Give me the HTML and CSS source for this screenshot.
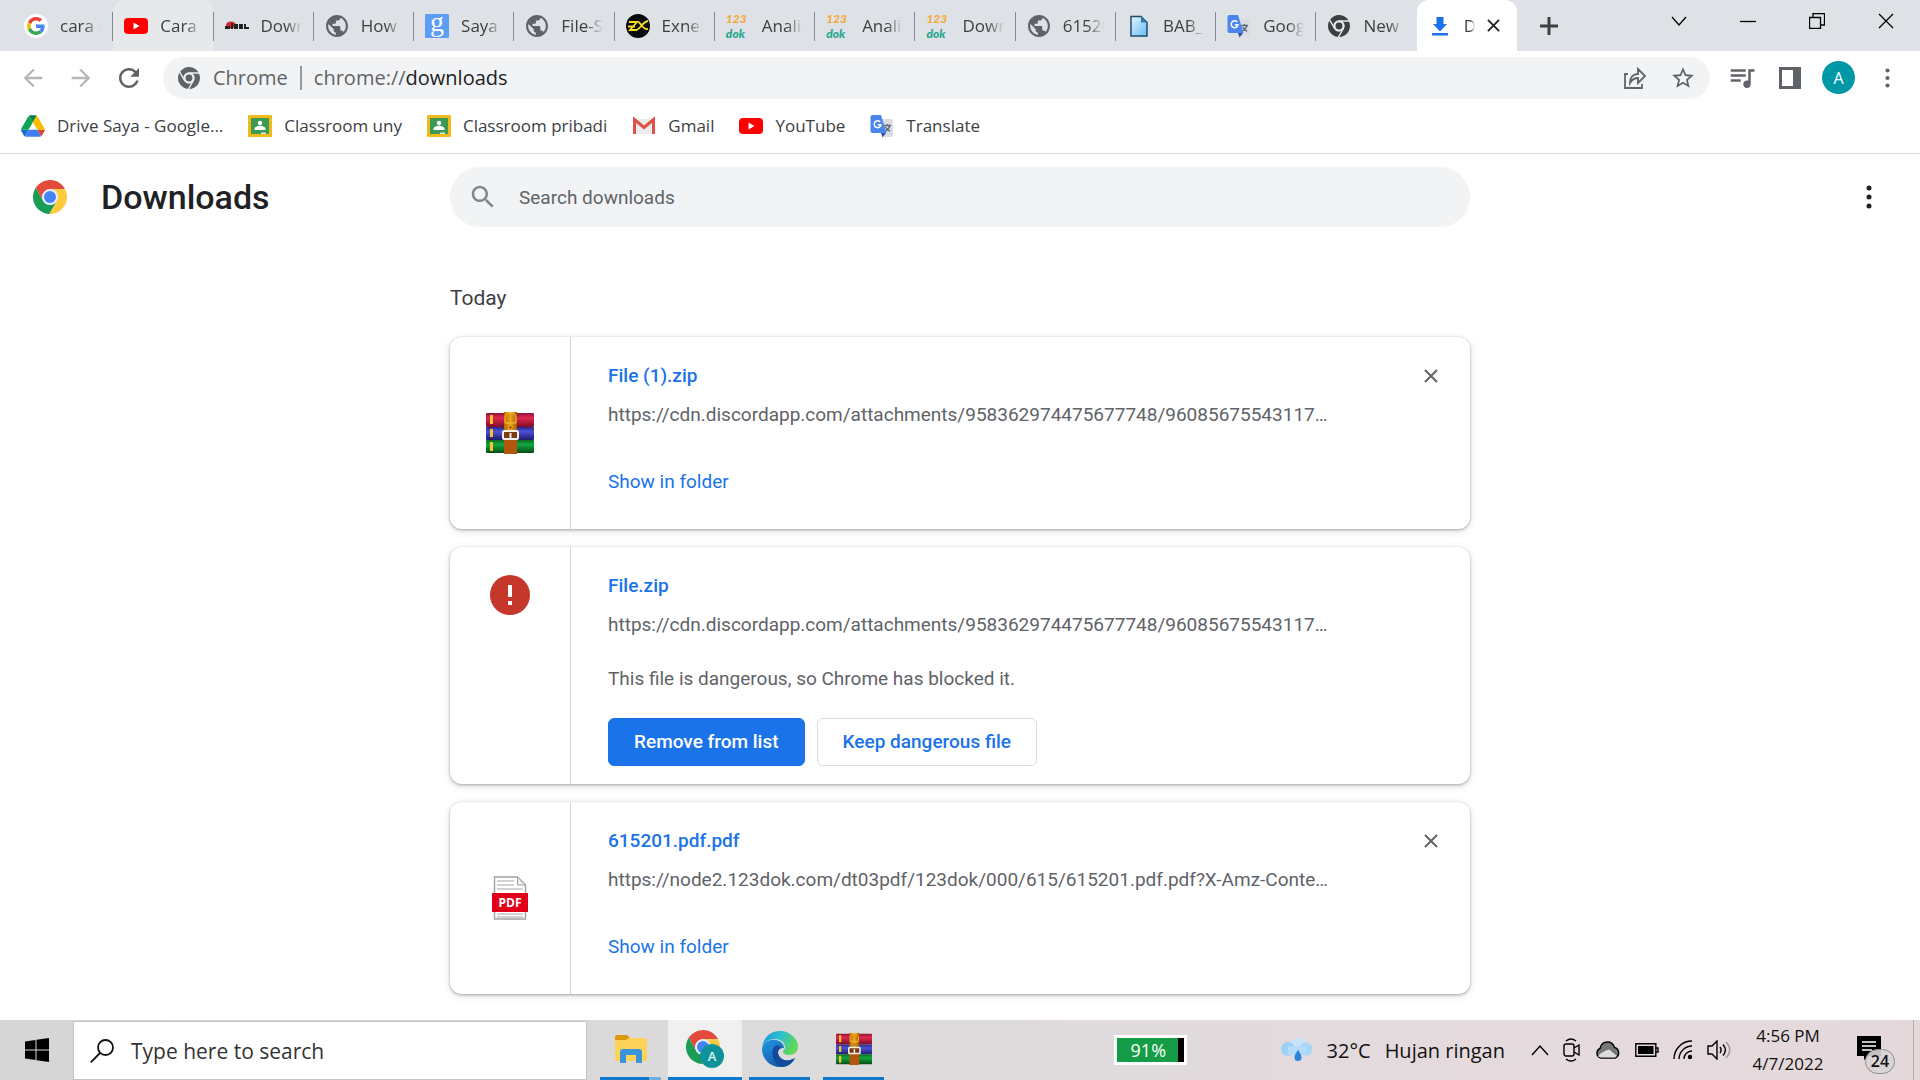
FILE: index.html
```html
<!DOCTYPE html>
<html lang="en">
<head>
  <meta charset="UTF-8" />
  <meta name="viewport" content="width=device-width, initial-scale=1.0"/>
  <title>Downloads</title>
  <link rel="stylesheet" href="styles.css">
</head>
<body>
  <!-- Shared icons -->
  <svg class="defs" aria-hidden="true">
    <symbol id="globe" viewBox="2 2 20 20"><path fill="#5f6368" d="M12 2C6.48 2 2 6.48 2 12s4.48 10 10 10 10-4.48 10-10S17.52 2 12 2zm-1 17.93c-3.95-.49-7-3.85-7-7.93 0-.62.08-1.21.21-1.79L9 15v1c0 1.1.9 2 2 2v1.93zm6.9-2.54c-.26-.81-1-1.39-1.9-1.39h-1v-3c0-.55-.45-1-1-1H8v-2h2c.55 0 1-.45 1-1V7h2c1.1 0 2-.9 2-2v-.41c2.93 1.19 5 4.06 5 7.41 0 2.08-.8 3.97-2.1 5.39z"/></symbol>
    <symbol id="youtube" viewBox="0 0 24 24"><rect y="4" width="24" height="16" rx="4" fill="#f00"/><path fill="#fff" d="M9.500 8.500v7l6-3.500z"/></symbol>
    <symbol id="translate" viewBox="0 0 24 24"><path fill="#dadce0" d="M9 5h12a2 2 0 0 1 2 2v14a2 2 0 0 1-2 2h-7z"/><path fill="none" stroke="#5f6b7a" stroke-width="1.300" d="M14 11.500h7M17.500 10v1.500M20 11.500c-.7 2.600-2.600 4.600-5 5.800M15.500 13c1 2 2.800 3.500 4.700 4.400"/><path fill="#2f4fa8" d="M11 19h5l-3.500 4.500z"/><path fill="#4a86ee" d="M2.500 1H11l5.500 18h-14a2 2 0 0 1-2-2V3a2 2 0 0 1 2-2z"/><path fill="none" stroke="#fff" stroke-width="1.500" d="M10.200 8A3.400 3.400 0 1 0 11 10.700H7.800"/></symbol>
    <symbol id="classroom" viewBox="0 0 24 24"><rect y="1" width="24" height="22" rx="1" fill="#f0b91c"/><rect x="3" y="4" width="18" height="16" fill="#3c9a53"/><circle cx="12" cy="9" r="2.200" fill="#fff"/><path fill="#fff" d="M6.500 16v-1.200c0-2 3.500-3 5.500-3s5.500 1 5.500 3V16z"/><path fill="#dfe9df" d="M13 18.500h5V20h-5z"/></symbol>
    <symbol id="chrome-mono" viewBox="0 0 48 48"><g fill="currentColor"><path d="M3.810 11.030A24 24 0 0 1 45.330 13L24 13A11 11 0 0 0 14.470 29.500Z"/><path d="M45.330 13A24 24 0 0 1 22.860 47.970L33.530 29.500A11 11 0 0 0 24 13Z"/><path d="M22.860 47.970A24 24 0 0 1 3.810 11.030L14.470 29.500A11 11 0 0 0 33.530 29.500Z"/></g><g fill="none" stroke="#eceef0" stroke-width="3"><path d="M24 13h22M33.530 29.500L22.500 48.600M14.470 29.500L3.500 10.500"/><circle cx="24" cy="24" r="11"/></g><circle cx="24" cy="24" r="7.500" fill="currentColor"/></symbol>
    <symbol id="chrome" viewBox="0 0 48 48"><path fill="#e34b3d" d="M3.810 11.030A24 24 0 0 1 45.330 13L24 13A11 11 0 0 0 14.470 29.500Z"/><path fill="#fdcb3c" d="M45.330 13A24 24 0 0 1 22.860 47.970L33.530 29.500A11 11 0 0 0 24 13Z"/><path fill="#1a9c55" d="M22.860 47.970A24 24 0 0 1 3.810 11.030L14.470 29.500A11 11 0 0 0 33.530 29.500Z"/><circle cx="24" cy="24" r="11" fill="#e8eefb"/><circle cx="24" cy="24" r="8.500" fill="#4384f4"/></symbol>
    <symbol id="arrow" viewBox="0 0 24 24"><path fill="currentColor" d="M20 11H7.830l5.590-5.590L12 4l-8 8 8 8 1.410-1.410L7.830 13H20v-2z"/></symbol>
    <symbol id="cross" viewBox="0 0 14 14"><path stroke="currentColor" stroke-width="2" d="M1 1l12 12M13 1L1 13"/></symbol>
    <symbol id="dots" viewBox="0 0 6 24"><g fill="currentColor"><circle cx="3" cy="3" r="2.500"/><circle cx="3" cy="12" r="2.500"/><circle cx="3" cy="21" r="2.500"/></g></symbol>
    <linearGradient id="book-red" x2="0" y2="1"><stop stop-color="#8c1534"/><stop offset=".35" stop-color="#e0284f"/><stop offset="1" stop-color="#7d0d28"/></linearGradient>
    <linearGradient id="book-blue" x2="0" y2="1"><stop stop-color="#2a2587"/><stop offset=".35" stop-color="#4c52d8"/><stop offset="1" stop-color="#1f1b6b"/></linearGradient>
    <linearGradient id="book-green" x2="0" y2="1"><stop stop-color="#0a6b22"/><stop offset=".35" stop-color="#12a83f"/><stop offset="1" stop-color="#064a16"/></linearGradient>
    <linearGradient id="strap" x2="1" y2="0"><stop stop-color="#b06a05"/><stop offset=".5" stop-color="#f0a51c"/><stop offset="1" stop-color="#a05c04"/></linearGradient>
    <symbol id="winrar" viewBox="0 0 48 42" preserveAspectRatio="none">
      <rect y="1" width="48" height="14" rx="1" fill="url(#book-red)"/>
      <rect y="15" width="48" height="13" rx="1" fill="url(#book-blue)"/>
      <rect y="28" width="48" height="13" rx="1" fill="url(#book-green)"/>
      <path fill="#f7c52b" d="M4 3h3v9H4zM4 17h3v8H4zM4 30h3v9H4z"/>
      <path fill="url(#strap)" d="M18 0h13v19H18z"/>
      <path fill="#b3560d" d="M18 27h13v15H18z"/>
      <path fill="none" stroke="#f8c43a" stroke-width="1" d="M19 11V6a5 5 0 0 1 11 0v5z"/>
      <circle cx="24.500" cy="15.500" r="1" fill="#5c3200"/>
      <rect x="17" y="19" width="15" height="8" rx="1" fill="#7a3c10" stroke="#f3f0ea" stroke-width="2"/>
      <path stroke="#f3f0ea" stroke-width="2" d="M24.500 21v6"/>
    </symbol>
  </svg>

  <!-- TAB STRIP -->
  <header class="tab-strip">
    <nav class="tabs" aria-label="Tabs">
      <a class="tab" href="#"><svg class="favicon" viewBox="-8 -8 64 64"><circle cx="24" cy="24" r="32" fill="#fff"/><path fill="#EA4335" d="M24 9.500c3.540 0 6.710 1.220 9.210 3.600l6.850-6.850C35.900 2.380 30.470 0 24 0 14.620 0 6.510 5.380 2.560 13.220l7.980 6.190C12.430 13.720 17.740 9.500 24 9.500z"/><path fill="#4285F4" d="M46.980 24.550c0-1.570-.15-3.090-.38-4.550H24v9.020h12.940c-.58 2.960-2.260 5.480-4.780 7.180l7.730 6c4.510-4.180 7.090-10.360 7.090-17.650z"/><path fill="#FBBC05" d="M10.530 28.590c-.48-1.450-.76-2.990-.76-4.590s.27-3.140.76-4.590l-7.980-6.190C.92 16.460 0 20.120 0 24c0 3.880.92 7.540 2.560 10.780l7.970-6.190z"/><path fill="#34A853" d="M24 48c6.480 0 11.930-2.130 15.890-5.810l-7.730-6c-2.150 1.450-4.920 2.300-8.160 2.300-6.260 0-11.570-4.220-13.470-9.910l-7.980 6.190C6.510 42.620 14.620 48 24 48z"/></svg><span class="tab-title">cara m</span></a>
      <a class="tab hovered" href="#"><svg class="favicon"><use href="#youtube"/></svg><span class="tab-title">Cara</span></a>
      <a class="tab" href="#"><svg class="favicon" viewBox="0 0 24 24"><ellipse cx="6" cy="11" rx="5" ry="3.500" fill="#d8232a"/><path fill="#222" d="M0 12h5v3H0zM6 9h2v6H6zM9 10h4v5H9zM14 10h4v5h-4zM19 10h2v3h3v2h-5z"/></svg><span class="tab-title">Down</span></a>
      <a class="tab" href="#"><svg class="favicon small"><use href="#globe"/></svg><span class="tab-title">How</span></a>
      <a class="tab" href="#"><svg class="favicon" viewBox="0 0 24 24"><rect width="24" height="24" rx="1" fill="#5c9df5"/><text x="12" y="17" text-anchor="middle" font-family="Liberation Serif" font-size="28" fill="#fff">g</text></svg><span class="tab-title">Saya</span></a>
      <a class="tab" href="#"><svg class="favicon small"><use href="#globe"/></svg><span class="tab-title">File-S</span></a>
      <a class="tab" href="#"><svg class="favicon" viewBox="0 0 24 24"><circle cx="12" cy="12" r="12" fill="#0a0a0a"/><path fill="none" stroke="#f5dc1e" stroke-width="1.800" d="M3 8h8l-7 8h6c4 0 6-8 12-9M2 12.500h7M12 8c3 0 4 8 10 7"/></svg><span class="tab-title">Exnes</span></a>
      <a class="tab" href="#"><span class="favicon dok"><b>123</b><b>dok</b></span><span class="tab-title">Analis</span></a>
      <a class="tab" href="#"><span class="favicon dok"><b>123</b><b>dok</b></span><span class="tab-title">Analis</span></a>
      <a class="tab" href="#"><span class="favicon dok"><b>123</b><b>dok</b></span><span class="tab-title">Down</span></a>
      <a class="tab" href="#"><svg class="favicon small"><use href="#globe"/></svg><span class="tab-title">61520</span></a>
      <a class="tab" href="#"><svg class="favicon" viewBox="0 0 24 24"><defs><linearGradient id="doc" x2="1" y2="1"><stop stop-color="#e3f4fe"/><stop offset="1" stop-color="#6bbcf2"/></linearGradient></defs><path fill="url(#doc)" stroke="#1d4e70" stroke-width="1.500" d="M4 2.500h10l6 6V22H4z"/><path fill="#2d7dae" d="M14 2.500v6h6z"/></svg><span class="tab-title">BAB_</span></a>
      <a class="tab" href="#"><svg class="favicon"><use href="#translate"/></svg><span class="tab-title">Goog</span></a>
      <a class="tab" href="#"><svg class="favicon small dark"><use href="#chrome-mono"/></svg><span class="tab-title">New</span></a>
      <div class="tab active">
        <svg class="favicon" viewBox="0 0 24 24"><path fill="#1a73e8" d="M8.500 3h7v7H19l-7 7.500L5 10h3.500zM4 19h16v2.500H4z"/></svg>
        <span class="tab-title">D</span>
        <button class="tab-close" aria-label="Close tab"><svg width="13" height="13"><use href="#cross"/></svg></button>
      </div>
    </nav>
    <button class="new-tab" aria-label="New tab"><svg width="18" height="18" viewBox="0 0 18 18"><path stroke="#3c4043" stroke-width="3" d="M9 0v18M0 9h18"/></svg></button>
    <div class="window-buttons">
      <button aria-label="Search tabs"><svg width="16" height="10" viewBox="0 0 16 10"><path d="M1 1l7 8 7-8"/></svg></button>
      <button aria-label="Minimize"><svg width="16" height="16" viewBox="0 0 16 16"><path d="M0 8.500h16"/></svg></button>
      <button aria-label="Restore"><svg width="16" height="16" viewBox="0 0 16 16"><path d="M.5 4.500h11v11H.5zM4 4V.5h11.500V12H12"/></svg></button>
      <button aria-label="Close"><svg width="16" height="16" viewBox="0 0 16 16"><path d="M1 1l14 14M15 1L1 15"/></svg></button>
    </div>
  </header>

  <!-- TOOLBAR -->
  <div class="toolbar">
    <button class="tool muted" aria-label="Back"><svg width="28" height="28"><use href="#arrow"/></svg></button>
    <button class="tool muted" aria-label="Forward"><svg class="flip" width="28" height="28"><use href="#arrow"/></svg></button>
    <button class="tool" aria-label="Reload"><svg width="30" height="30" viewBox="0 0 24 24"><path fill="currentColor" d="M17.650 6.350C16.200 4.900 14.210 4 12 4c-4.420 0-7.990 3.580-7.990 8s3.570 8 7.990 8c3.730 0 6.840-2.550 7.730-6h-2.080c-.82 2.330-3.040 4-5.650 4-3.310 0-6-2.690-6-6s2.690-6 6-6c1.660 0 3.140.69 4.220 1.780L13 11h7V4l-2.350 2.350z"/></svg></button>
    <div class="omnibox">
      <svg class="site-icon"><use href="#chrome-mono"/></svg>
      <span class="site-name">Chrome</span>
      <span class="address">chrome://<b>downloads</b></span>
      <button class="tool" aria-label="Share"><svg width="24" height="24" viewBox="0 0 24 24"><path fill="none" stroke="currentColor" stroke-width="1.800" d="M5 8H2v14h17v-4M7 17c0-6 3-9 8-9V3l7 7-7 7v-5c-4 0-6 1.500-8 5z"/></svg></button>
      <button class="tool" aria-label="Bookmark this page"><svg width="26" height="26" viewBox="0 0 24 24"><path fill="currentColor" d="M22 9.240l-7.190-.62L12 2 9.190 8.630 2 9.240l5.460 4.730L5.820 21 12 17.270 18.180 21l-1.630-7.030L22 9.240zM12 15.400l-3.760 2.270 1-4.280-3.320-2.880 4.380-.38L12 6.100l1.710 4.040 4.380.38-3.320 2.880 1 4.280L12 15.400z"/></svg></button>
    </div>
    <button class="tool" aria-label="Media controls"><svg width="30" height="30" viewBox="0 0 24 24"><path fill="currentColor" d="M15 5H3v2h12V5zm0 4H3v2h12V9zM3 15h8v-2H3v2zM17 5v9.180c-.31-.11-.65-.18-1-.18-1.660 0-3 1.340-3 3s1.340 3 3 3 3-1.340 3-3V7h3V5h-5z"/></svg></button>
    <button class="tool" aria-label="Side panel"><svg width="22" height="22" viewBox="0 0 22 22"><path fill="currentColor" d="M0 0h22v22H0zM3 3v16h11V3z" fill-rule="evenodd"/></svg></button>
    <button class="avatar" aria-label="Profile">A</button>
    <button class="tool" aria-label="Menu"><svg width="5" height="20"><use href="#dots"/></svg></button>
  </div>

  <!-- BOOKMARKS -->
  <nav class="bookmarks" aria-label="Bookmarks">
    <a href="#"><svg class="favicon" viewBox="0 0 88 78"><path fill="#1967d2" d="M6.600 66.850l3.850 6.650c.8 1.400 1.950 2.500 3.300 3.300L27.500 53H0c0 1.550.4 3.100 1.200 4.500z"/><path fill="#11a455" d="M43.650 25L29.900 1.200c-1.350.8-2.500 1.900-3.300 3.300L1.200 48.500A9 9 0 0 0 0 53h27.500z"/><path fill="#e0452f" d="M73.550 76.800c1.350-.8 2.500-1.900 3.300-3.300l9.250-16c.8-1.400 1.200-2.950 1.200-4.500H59.800z"/><path fill="#0b8043" d="M43.650 25L57.400 1.200C56.050.4 54.500 0 52.900 0H34.400c-1.600 0-3.150.45-4.500 1.200z"/><path fill="#3d7ef0" d="M59.800 53H27.500L13.750 76.800c1.350.8 2.900 1.200 4.500 1.200h50.800c1.600 0 3.150-.45 4.500-1.200z"/><path fill="#fbbc04" d="M73.400 26.500L60.700 4.500c-.8-1.400-1.950-2.500-3.300-3.300L43.650 25 59.800 53h27.450c0-1.550-.4-3.100-1.200-4.500z"/></svg>Drive Saya - Google...</a>
    <a href="#"><svg class="favicon"><use href="#classroom"/></svg>Classroom uny</a>
    <a href="#"><svg class="favicon"><use href="#classroom"/></svg>Classroom pribadi</a>
    <a href="#"><svg class="favicon" viewBox="0 0 24 24"><path fill="#ececec" d="M2 5h20v15H2z"/><path fill="none" stroke="#dc5148" stroke-width="3" d="M2.500 20V5.500L12 13.500l9.500-8V20"/></svg>Gmail</a>
    <a href="#"><svg class="favicon"><use href="#youtube"/></svg>YouTube</a>
    <a href="#"><svg class="favicon"><use href="#translate"/></svg>Translate</a>
  </nav>

  <!-- DOWNLOADS PAGE -->
  <main class="page">
    <div class="page-header">
      <div class="brand">
        <svg class="logo"><use href="#chrome"/></svg>
        <h1>Downloads</h1>
      </div>
      <label class="search">
        <svg width="30" height="30" viewBox="0 0 24 24"><path fill="#80868b" d="M15.500 14h-.79l-.28-.27C15.410 12.590 16 11.110 16 9.500 16 5.910 13.090 3 9.500 3S3 5.910 3 9.500 5.910 16 9.500 16c1.610 0 3.090-.59 4.230-1.570l.27.28v.79l5 4.990L20.490 19l-4.990-5zm-6 0C7.010 14 5 11.990 5 9.500S7.010 5 9.500 5 14 7.010 14 9.500 11.990 14 9.500 14z"/></svg>
        <input type="search" placeholder="Search downloads" aria-label="Search downloads">
      </label>
      <button class="more" aria-label="More actions"><svg width="6" height="24"><use href="#dots"/></svg></button>
    </div>

    <section class="list">
      <h2>Today</h2>

      <article class="card">
        <div class="file-icon"><svg width="48" height="42"><use href="#winrar"/></svg></div>
        <div class="details">
          <a class="name" href="#">File (1).zip</a>
          <p class="url">https://cdn.discordapp.com/attachments/958362974475677748/96085675543117…</p>
          <a class="show" href="#">Show in folder</a>
        </div>
        <button class="remove" aria-label="Remove from list"><svg width="14" height="14"><use href="#cross"/></svg></button>
      </article>

      <article class="card dangerous">
        <div class="file-icon"><svg width="40" height="40" viewBox="0 0 40 40"><circle cx="20" cy="20" r="20" fill="#c5362b"/><path fill="#fff" d="M18 10h4v12h-4zM18 26h4v4h-4z"/></svg></div>
        <div class="details">
          <a class="name" href="#">File.zip</a>
          <p class="url">https://cdn.discordapp.com/attachments/958362974475677748/96085675543117…</p>
          <p class="warning">This file is dangerous, so Chrome has blocked it.</p>
          <div class="actions">
            <button class="btn primary">Remove from list</button>
            <button class="btn">Keep dangerous file</button>
          </div>
        </div>
      </article>

      <article class="card">
        <div class="file-icon"><svg width="36" height="44" viewBox="0 0 36 44"><path fill="#fff" stroke="#a3a3a3" stroke-width="1.500" d="M2.500 1h23l8 8v34h-31z"/><path fill="#eee" stroke="#a3a3a3" d="M25.500 1v8h8z"/><path stroke="#c4c4c4" stroke-width="1.500" d="M5 5h17M5 9h17M5 13h26M5 38h26M5 41h26"/><path fill="#e1001a" d="M0 17h36v19H0z"/><text x="18" y="31" text-anchor="middle" font-family="Open Sans" font-weight="700" font-size="12" fill="#fff">PDF</text></svg></div>
        <div class="details">
          <a class="name" href="#">615201.pdf.pdf</a>
          <p class="url">https://node2.123dok.com/dt03pdf/123dok/000/615/615201.pdf.pdf?X-Amz-Conte…</p>
          <a class="show" href="#">Show in folder</a>
        </div>
        <button class="remove" aria-label="Remove from list"><svg width="14" height="14"><use href="#cross"/></svg></button>
      </article>
    </section>
  </main>

  <!-- TASKBAR -->
  <footer class="taskbar">
    <button class="start" aria-label="Start"><svg width="24" height="24" viewBox="0 0 24 24"><path d="M0 3.400L10.500 2v9.500H0zM11.500 1.800L24 0v11.500H11.500zM0 12.500h10.500V22L0 20.600zM11.500 12.500H24V24l-12.500-1.800z"/></svg></button>
    <label class="task-search">
      <svg width="24" height="24" viewBox="0 0 24 24" fill="none" stroke="#111" stroke-width="1.800"><circle cx="15.500" cy="8.500" r="7.500"/><path d="M10 14L.8 23.300"/></svg>
      <input type="search" placeholder="Type here to search" aria-label="Type here to search">
    </label>
    <div class="apps">
      <button class="app stacked" aria-label="File Explorer"><svg width="34" height="28" viewBox="0 0 34 28"><path fill="#d99a0b" d="M1 2a2 2 0 0 1 2-2h10l3 3-3 4H1z"/><path fill="#fcd258" d="M1 5h11l3-2h16a2 2 0 0 1 2 2v21H1z"/><path fill="#3a94da" d="M6 28V17a3 3 0 0 1 3-3h16a3 3 0 0 1 3 3v11h-6v-8H12v8z"/></svg></button>
      <button class="app current" aria-label="Google Chrome"><svg width="38" height="38" viewBox="0 0 38 38"><use href="#chrome" width="34" height="34"/><circle cx="26" cy="26" r="12" fill="#0f9299"/><text x="26" y="31" text-anchor="middle" font-family="Open Sans" font-size="13" font-weight="600" fill="#d9f3f3">A</text></svg></button>
      <button class="app" aria-label="Microsoft Edge"><svg width="36" height="36" viewBox="0 0 36 36"><defs><linearGradient id="edge-top" x1="0" x2="1" y2=".4"><stop stop-color="#1b8fd8"/><stop offset=".5" stop-color="#2bbfd3"/><stop offset="1" stop-color="#5fd957"/></linearGradient><linearGradient id="edge-low" x2=".7" y2="1"><stop stop-color="#1f97e3"/><stop offset="1" stop-color="#1454a4"/></linearGradient></defs><path fill="url(#edge-low)" d="M0 18C1 11 7 8 14 9c5 1 8 4 8 8-6 0-7 4-5 8 3 5 10 6 16 2-3 6-9 9-15 9C8 36 0 28 0 18z"/><path fill="#134b9b" d="M14 14c-6 5-5 17 6 22 6-.5 10-3.500 13-9-6 4-13 3-16-2-2-4-1-7 3-9z"/><path fill="url(#edge-top)" d="M0 17C1 7 8 0 18 0s18 8 18 15c0 6-4 9-9 9-4 0-6-1.500-6-3s2-2 2-5c0-4-4-8-10-8C6 8 1 12 0 17z"/></svg></button>
      <button class="app" aria-label="WinRAR"><svg width="36" height="32"><use href="#winrar"/></svg></button>
    </div>
    <div class="battery-meter"><span>91%</span></div>
    <div class="tray">
      <button class="weather"><svg width="32" height="24" viewBox="0 0 32 24"><circle cx="17" cy="8" r="8" fill="#c6e3f9"/><circle cx="7" cy="11" r="7" fill="#9dd0f5"/><circle cx="25" cy="11" r="6.500" fill="#a6d6f8"/><path fill="#b4dbf8" d="M7 8h18v9H7z"/><path fill="#2b86da" d="M17 12c2 3 3.500 5 3.500 7.500a3.500 3.500 0 0 1-7 0c0-2.500 1.500-4.500 3.500-7.500z"/></svg><span>32°C</span><span>Hujan ringan</span></button>
      <button class="tray-icon" aria-label="Show hidden icons"><svg width="18" height="12" viewBox="0 0 18 12"><path d="M1 11l8-9 8 9"/></svg></button>
      <button class="tray-icon" aria-label="Meet Now"><svg width="18" height="24" viewBox="0 0 18 24"><rect x="1" y="6" width="10" height="12" rx="2"/><path d="M11 10l5-3v10l-5-3M3 3c3-2.500 7-2.500 10 0M3 21c3 2.500 7 2.500 10 0"/></svg></button>
      <button class="tray-icon" aria-label="OneDrive"><svg width="26" height="18" viewBox="0 0 26 18"><path fill="#777" d="M6 17a5 5 0 0 1-1-9.500C6 3 9 1 12.500 1c4 0 6 2.500 7 5.500A5.500 5.500 0 0 1 20 17z"/><path fill="#ddd" stroke="none" d="M3 15.500c1-3 8-6 11-7l8 6.500-2 1.500H6z"/></svg></button>
      <button class="tray-icon" aria-label="Battery"><svg width="24" height="14" viewBox="0 0 24 14"><path d="M.8.8h20v12.400H.8zM21 5h2v4h-2"/><path fill="#000" stroke="none" d="M3 3h15.500v8H3z"/></svg></button>
      <button class="tray-icon" aria-label="Wi-Fi"><svg width="20" height="20" viewBox="0 0 20 20"><path d="M1 19C1 9 9 1 19 1M6 19C6 12 12 6 19 6M11 19c0-4.500 3.500-8 8-8"/><circle cx="17" cy="17" r="1.500" fill="#000"/></svg></button>
      <button class="tray-icon" aria-label="Volume"><svg width="24" height="20" viewBox="0 0 24 20"><path d="M1 6h4l5-5v18l-5-5H1zM13 7c1.500 2 1.500 4 0 6M16 4.500c3 3.500 3 7.500 0 11"/><path stroke="#999" d="M19 2c5 5 5 11 0 16"/></svg></button>
      <button class="clock"><span>4:56 PM</span><span>4/7/2022</span></button>
      <button class="notifications" aria-label="24 notifications"><svg width="24" height="24" viewBox="0 0 24 24"><path d="M0 0h24v20H12l-5 4v-4H0z"/><path stroke="#fff" stroke-width="1.500" d="M5 6h14M5 10h14M5 14h10"/></svg><span class="badge">24</span></button>
    </div>
  </footer>
</body>
</html>
```
FILE: styles.css
```css
* {
  margin: 0;
  padding: 0;
  box-sizing: border-box;
}

body {
  height: 100vh;
  display: flex;
  flex-direction: column;
  overflow: hidden;
  background: #fff;
  color: #3c4043;
  font-family: "Open Sans", "Noto Sans", sans-serif;
  font-size: 17px;
}

.defs {
  position: absolute;
  width: 0;
  height: 0;
}

svg {
  display: block;
  flex: none;
}

a {
  color: inherit;
  text-decoration: none;
}

button {
  display: flex;
  align-items: center;
  justify-content: center;
  border: none;
  background: none;
  color: inherit;
  font: inherit;
}

input {
  flex: 1;
  min-width: 0;
  border: none;
  outline: none;
  background: none;
  font: inherit;
}

.favicon {
  width: 24px;
  height: 24px;
}

/* TAB STRIP */
.tab-strip {
  display: flex;
  height: 51px;
  flex: none;
  padding-left: 13px;
  background: #dee1e6;
}

.tabs {
  display: grid;
  grid-template-columns: repeat(15, minmax(0, 1fr));
  flex: 0 1 1504px;
  min-width: 0;
}

.tab {
  position: relative;
  display: flex;
  align-items: center;
  min-width: 0;
  gap: 12px;
  padding: 0 12px 0 11px;
}

/* Separator between tabs */
.tab:not(.active)::after {
  content: "";
  position: absolute;
  right: 0;
  top: 12px;
  width: 1px;
  height: 29px;
  background: #85898f;
}

.tab:nth-last-child(2)::after {
  display: none;
}

.tab.hovered {
  background: #e6e8eb;
  border-radius: 12px 12px 0 0;
}

.favicon.small {
  width: 22px;
  height: 22px;
  margin: 0 1px;
}

.favicon.dark {
  color: #3c4043;
}

/* 123dok logo, two stacked words */
.dok {
  display: flex;
  flex: none;
  flex-direction: column;
  justify-content: center;
  font-family: Lato, sans-serif;
  font-size: 12px;
  font-style: italic;
  line-height: 15px;
  color: #1fa68d;
}

.dok b {
  font-weight: 900;
}

.dok b:first-child {
  color: #f5a93b;
}

.tab-title {
  flex: 1;
  overflow: hidden;
  white-space: nowrap;
  font-size: 17px;
  -webkit-mask-image: linear-gradient(to right, #000 60%, transparent);
  mask-image: linear-gradient(to right, #000 60%, transparent);
}

.tab.active {
  padding-right: 17px;
  background: #fff;
  border-radius: 12px 12px 0 0;
}

.tab-close {
  height: 24px;
  color: #202124;
}

.new-tab {
  width: 64px;
}

.window-buttons {
  display: flex;
  height: 42px;
  margin-left: auto;
}

.window-buttons button {
  width: 69px;
}

.window-buttons path {
  fill: none;
  stroke: #000;
  stroke-width: 1.3;
}

/* TOOLBAR */
.toolbar {
  display: flex;
  align-items: center;
  flex: none;
  height: 53px;
  padding: 0 9px;
  color: #5f6368;
}

.tool {
  width: 48px;
  height: 42px;
  flex: none;
}

.tool.muted {
  color: #b4b6b9;
}

.flip {
  transform: scaleX(-1);
}

.omnibox {
  display: flex;
  align-items: center;
  flex: 1;
  height: 42px;
  margin: 0 8px 0 10px;
  padding: 0 3px 0 15px;
  border-radius: 21px;
  background: #f1f3f4;
  font-size: 20px;
}

.site-icon {
  width: 22px;
  height: 22px;
}

.site-name {
  margin-left: 13px;
  padding-right: 12px;
  border-right: 2px solid #96999d;
  line-height: 24px;
}

.address {
  flex: 1;
  margin-left: 12px;
}

.address b {
  color: #202124;
  font-weight: 400;
}

.avatar {
  width: 33px;
  height: 33px;
  margin: 0 8px;
  border-radius: 50%;
  background: #0097a7;
  color: #fff;
  font-size: 16px;
}

/* BOOKMARKS */
.bookmarks {
  display: flex;
  align-items: center;
  flex: none;
  gap: 25px;
  height: 50px;
  padding: 0 21px 6px;
  border-bottom: 1px solid #d5d7da;
}

.bookmarks a {
  display: flex;
  align-items: center;
  gap: 12px;
  white-space: nowrap;
}

/* DOWNLOADS PAGE */
.page {
  flex: 1;
  min-height: 0;
  overflow: hidden;
  font-family: Roboto, sans-serif;
  font-size: 19px;
}

.page-header {
  display: grid;
  grid-template-columns: 1fr minmax(0, 1020px) 1fr;
  align-items: center;
  height: 86px;
}

.brand {
  display: flex;
  align-items: center;
  gap: 34px;
  padding-left: 33px;
}

.logo {
  width: 34px;
  height: 34px;
}

h1 {
  color: #202124;
  font-size: 34px;
  font-weight: 500;
}

.search {
  display: flex;
  align-items: center;
  gap: 21px;
  height: 60px;
  padding: 0 18px;
  border-radius: 30px;
  background: #f1f3f4;
}

.search input::placeholder {
  color: #5f6368;
}

.more {
  width: 48px;
  height: 48px;
  justify-self: end;
  margin-right: 27px;
  color: #202124;
}

.list {
  width: min(1020px, 100%);
  margin: 0 auto;
}

h2 {
  padding: 43px 0 24px;
  color: #3c4043;
  font-size: 21px;
  font-weight: 400;
  line-height: 30px;
}

.card {
  display: flex;
  margin-bottom: 18px;
  border-radius: 12px;
  background: #fff;
  box-shadow: 0 1px 3px rgba(60, 64, 67, .4), 0 2px 8px rgba(60, 64, 67, .15);
}

.file-icon {
  display: flex;
  align-items: center;
  justify-content: center;
  width: 121px;
  flex: none;
  border-right: 1px solid #d5d7da;
}

.dangerous .file-icon {
  align-items: flex-start;
  padding-top: 28px;
}

.details {
  flex: 1;
  min-width: 0;
  padding: 24px 0 32px 37px;
  line-height: 30px;
}

.dangerous .details {
  padding-bottom: 18px;
}

.details p {
  color: #5f6368;
}

.name,
.show {
  display: block;
  width: max-content;
  color: #1a73e8;
}

.name {
  font-weight: 500;
}

.url {
  margin-top: 9px;
  overflow: hidden;
  white-space: nowrap;
  text-overflow: ellipsis;
}

.show {
  margin-top: 37px;
}

.warning {
  margin-top: 24px;
}

.actions {
  display: flex;
  gap: 12px;
  margin-top: 24px;
}

.btn {
  height: 48px;
  padding: 0 25px;
  border: 1px solid #dadce0;
  border-radius: 6px;
  color: #1a73e8;
  font-weight: 500;
}

.btn.primary {
  border-color: #1a73e8;
  background: #1a73e8;
  color: #fff;
}

.remove {
  width: 48px;
  height: 48px;
  margin: 15px 15px 0 0;
  color: #5f6368;
}

/* TASKBAR */
.taskbar {
  display: flex;
  flex: none;
  height: 60px;
  background: linear-gradient(to right, #d6d6d7, #dddbdc 45%, #e5dadd 80%, #e4d8db);
  color: #111;
  font-size: 20px;
}

.start {
  width: 73px;
}

.task-search {
  display: flex;
  align-items: center;
  gap: 17px;
  width: 514px;
  margin-top: 1px;
  padding-left: 16px;
  border: 1px solid #c4c4c4;
  background: #fff;
  font-size: 21px;
}

.task-search input::placeholder {
  color: #333;
}

.apps {
  display: flex;
  gap: 13px;
  padding-left: 13px;
}

.app {
  width: 61px;
  border-bottom: 3px solid #0f78cc;
}

.app.stacked {
  margin-right: -6px;
  border-image: linear-gradient(to right, #0f78cc 80%, #72aede 80%) 1;
}

.app.current {
  width: 74px;
  margin-right: -6px;
  background: #f1f0f0;
}

.battery-meter {
  align-self: center;
  margin-left: auto;
  padding: 3px;
  background: #fff;
  color: #fff;
}

.battery-meter span {
  display: block;
  width: 67px;
  padding-left: 14px;
  border-right: 6px solid #000;
  background: #149c46;
  font-size: 18px;
  line-height: 24px;
}

.tray {
  display: flex;
  align-items: center;
  margin-left: 94px;
  padding-right: 10px;
  border-right: 1px solid #b5abae;
  margin-right: 6px;
}

.weather {
  gap: 14px;
  margin-right: 26px;
}

.tray-icon {
  margin-right: 14px;
}

.tray-icon svg {
  fill: none;
  stroke: #000;
  stroke-width: 1.4;
}

.clock {
  flex-direction: column;
  width: 94px;
  margin-left: -4px;
  font-size: 17px;
  line-height: 28px;
}

.notifications {
  position: relative;
  width: 68px;
  height: 60px;
  padding-bottom: 4px;
}

/* Unread count over the notification icon */
.badge {
  position: absolute;
  left: 30px;
  top: 29px;
  width: 30px;
  height: 25px;
  border: 1px solid #8f8f8f;
  border-radius: 13px;
  background: rgba(215, 212, 213, .9);
  font-size: 16px;
  font-weight: 600;
  line-height: 23px;
  text-align: center;
}
```
